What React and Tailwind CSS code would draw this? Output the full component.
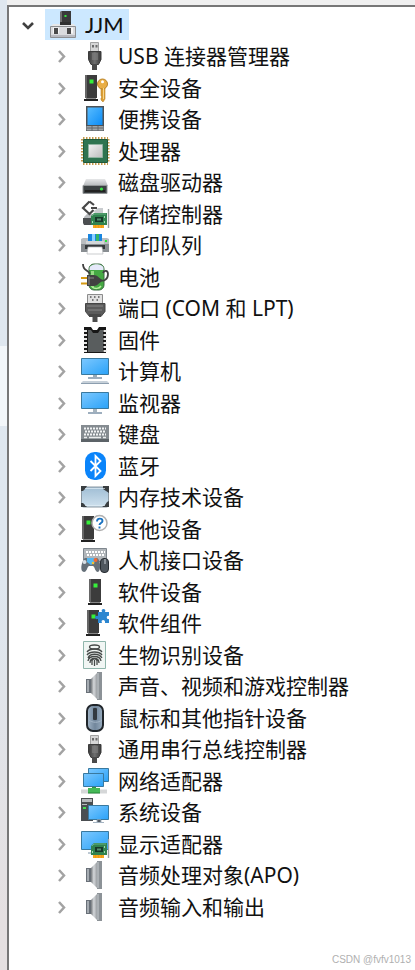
import React from "react";

const Svg = ({ children }) => (
  <svg viewBox="0 0 30 30" className="h-[30px] w-[30px] shrink-0" aria-hidden="true">
    {children}
  </svg>
);

const Defs = () => (
  <svg className="absolute h-0 w-0" aria-hidden="true">
    <defs>
      <linearGradient id="screen" x1="0" y1="0" x2="1" y2="1">
        <stop offset="0" stopColor="#7cc8ff" />
        <stop offset="1" stopColor="#2aa2f8" />
      </linearGradient>
      <linearGradient id="tablet" x1="0" y1="0" x2="1" y2="1">
        <stop offset="0" stopColor="#58bcff" />
        <stop offset="1" stopColor="#0c8cf6" />
      </linearGradient>
      <linearGradient id="steel" x1="0" y1="0" x2="1" y2="0">
        <stop offset="0" stopColor="#75797d" />
        <stop offset="0.4" stopColor="#d4d7da" />
        <stop offset="1" stopColor="#8a8e92" />
      </linearGradient>
      <linearGradient id="silver" x1="0" y1="0" x2="0" y2="1">
        <stop offset="0" stopColor="#e6e7e8" />
        <stop offset="1" stopColor="#b4b7ba" />
      </linearGradient>
      <linearGradient id="chip" x1="0" y1="0" x2="1" y2="1">
        <stop offset="0" stopColor="#f2f2f2" />
        <stop offset="1" stopColor="#bdbdbd" />
      </linearGradient>
      <linearGradient id="memory" x1="0" y1="0" x2="0" y2="1">
        <stop offset="0" stopColor="#9fbdd4" />
        <stop offset="1" stopColor="#cfe1ee" />
      </linearGradient>
      <linearGradient id="plug" x1="0" y1="0" x2="1" y2="0">
        <stop offset="0" stopColor="#3b3b3b" />
        <stop offset="0.5" stopColor="#6f6f6f" />
        <stop offset="1" stopColor="#383838" />
      </linearGradient>
      <linearGradient id="mouse" x1="0" y1="0" x2="1" y2="0">
        <stop offset="0" stopColor="#a3b6c8" />
        <stop offset="0.5" stopColor="#71869b" />
        <stop offset="1" stopColor="#9aaec1" />
      </linearGradient>
    </defs>
  </svg>
);

const Tower = ({ x = 0 }) => (
  <g transform={`translate(${x} 0)`}>
    <path d="M1 2h12v23H1z" fill="#3c3c3c" />
    <path d="M1 2h2v23H1z" fill="#666" />
    <path d="M0 26h14v2H0z" fill="#222" />
    <path d="M2 25h10v1H2z" fill="#888" />
    <path d="M5.500 6.500h4v4h-4z" fill="#36f03a" />
  </g>
);

const Card = () => (
  <g>
    <path d="M13 25h11v4H13z" fill="#f6a51c" />
    <path d="M15.500 25v4M18.500 25v4M21.500 25v4" stroke="#e08f10" strokeWidth="0.500" />
    <path d="M11 17l3-3h13v12H11z" fill="#31824f" />
    <path d="M12 17l2-2h12" fill="none" stroke="#69b083" />
    <path d="M15 18h8v5h-8z" fill="#17382a" />
    <path d="M17 19.500h4v2h-4z" fill="#568f70" />
    <path d="M12.500 22v2M24.500 17v2M24.500 22v2" stroke="#9fd8b0" />
    <path d="M28.500 10v19" stroke="#9a9fa2" strokeWidth="1.400" />
  </g>
);

const Usb = () => (
  <Svg>
    <path d="M10.500 1.500h8v9h-8z" fill="#d6d6d6" stroke="#a2a2a2" />
    <path d="M12 4h2v2.500h-2zM15.500 4h2v2.500h-2z" fill="#6b6b6b" />
    <path d="M8.500 10.500h12.500v8l-2.500 5h-7.500l-2.500-5z" fill="url(#plug)" stroke="#3c3c3c" />
    <path d="M12 12h6v7h-6z" fill="#808080" opacity="0.600" />
    <path d="M12 23h5v6h-5z" fill="#4a4a4a" />
  </Svg>
);

const Computer = () => (
  <Svg>
    <path d="M11 2l2-1h9v15H11z" fill="#3a3a3a" />
    <path d="M11 2l2-1v15h-2z" fill="#707070" />
    <path d="M15.500 5h2v2h-2z" fill="#36e63c" />
    <path d="M4 14h21l2 3H1z" fill="#e6e7e8" />
    <path d="M11 12h11v3H11z" fill="#303030" />
    <path d="M1.500 16.500h25v11h-25z" fill="#dadbde" stroke="#8d8f92" />
    <path d="M2 25h24v2H2z" fill="#b9bac0" />
    <path d="M4 17.500h6v6H4zM18 17.500h6v6h-6z" fill="#f7f7f7" />
    <path d="M5 18h4v6H5zM18 18h4v6h-4z" fill="#4a4a4a" />
  </Svg>
);

const Security = () => (
  <Svg>
    <Tower x={4} />
    <path d="M21 13h4v13l-2 3-2-2v-2l1-1-1-1z" fill="#dc9e35" stroke="#b98328" strokeWidth="0.600" />
    <circle cx="22.500" cy="11" r="5" fill="#e9ae45" stroke="#b98328" />
    <circle cx="22.500" cy="8.800" r="1.500" fill="#fff" />
    <path d="M23.500 15v11" stroke="#f8d68b" />
  </Svg>
);

const Portable = () => (
  <Svg>
    <path d="M6 2h18v25H6z" fill="#4c5257" />
    <path d="M7.500 3.500h15v17.500h-15z" fill="url(#tablet)" />
    <path d="M6.500 22h17v4.500h-17z" fill="#a0a5a8" />
    <path d="M12 22v5M18 22v5M7 24h16" stroke="#64696d" />
  </Svg>
);

const Processor = () => (
  <Svg>
    <path d="M3 2h25M3 28h25M2 3v24M28.500 3v24" stroke="#c59a4d" strokeWidth="2" strokeDasharray="1.500 1.500" />
    <path d="M3.500 3.500h24v23h-24z" fill="#2f7450" stroke="#1f5a3b" />
    <path d="M8.500 8.500h14v13h-14z" fill="url(#chip)" stroke="#90b3a0" />
  </Svg>
);

const Disk = () => (
  <Svg>
    <path d="M6 12h19l3 7H3z" fill="url(#silver)" />
    <path d="M3 18.500h24v8H3z" fill="#3b4042" stroke="#939698" />
    <path d="M5 24h20" stroke="#222" strokeWidth="2" />
    <circle cx="21.500" cy="22" r="1.600" fill="#3de348" />
  </Svg>
);

const Storage = () => (
  <Svg>
    <path d="M3 19h12v7H4l-1-2z" fill="#4b4e50" />
    <path d="M4 18l3-3h8l-2 4H4z" fill="#b7babd" />
    <path d="M14 12l4-3h5v6h-8z" fill="#c9cccf" />
    <path d="M9.500 2.500L3 9l6.500 6 4-4M9.500 2.500L14 6M11 9h6" fill="none" stroke="#484848" strokeWidth="2.200" />
    <Card />
  </Svg>
);

const Printer = () => (
  <Svg>
    <path d="M1 9l2-1h24l2 1v13H1z" fill="#b9bdc0" />
    <path d="M1 14h28v8H1z" fill="#898e92" />
    <path d="M8 4h14v7H8z" fill="#1a86e0" />
    <path d="M12 4h3v7h-3z" fill="#8bd1ff" />
    <path d="M16 4h3v7h-3z" fill="#35b565" />
    <path d="M6 11h18v3H6z" fill="#d3d6d8" />
    <path d="M5 15h20v4H5z" fill="#34383b" />
    <path d="M8 17h14l1 7H7z" fill="#fff" stroke="#b5b8ba" strokeWidth="0.700" />
    <path d="M25 10h2v2h-2z" fill="#2be53a" />
  </Svg>
);

const Battery = () => (
  <Svg>
    <rect x="9" y="2" width="15" height="26" rx="5" fill="#45a943" stroke="#3b6841" />
    <path d="M9.500 8V6c1-5 13-5 14 0v2z" fill="#e6e9fa" />
    <path d="M11 9h3v16h-3z" fill="#96dc84" />
    <path d="M12 25c3 2 7 2 9-1" fill="none" stroke="#b8f09f" strokeWidth="1.500" />
    <path d="M3 2c0 7 4 5 7 10M20 18c4 2 8-1 8-6 0-4-4-4-5-1" fill="none" stroke="#414141" strokeWidth="1.800" />
    <path d="M1 16h7M1 21.500h7" stroke="#d69a14" strokeWidth="2" />
    <path d="M7 13h7c3 0 5 3 9 5.500-4 2.500-6 5.500-9 5.500H7z" fill="#414141" />
    <path d="M8 16h6M9 14v9" stroke="#888" />
  </Svg>
);

const Port = () => (
  <Svg>
    <path d="M7.500 1.500h15v9h-15z" fill="#e1e1e1" stroke="#8c8c8c" />
    <path d="M10 4h1.500M14 4h1.500M18 4h1.500M12 7h1.500M16.500 7H18" stroke="#555" strokeWidth="1.500" />
    <path d="M5.500 10.500h19.500v8l-4 5H9.500l-4-5z" fill="#5b5b5b" stroke="#454545" />
    <path d="M7 13h16M8 17h14" stroke="#898989" />
    <path d="M9 21h12v3H9z" fill="#484848" />
    <path d="M12.500 24h5v5h-5z" fill="#4b4b4b" />
  </Svg>
);

const Firmware = () => (
  <Svg>
    <path d="M4 2h7l2 3h4l2-3h7v26H4z" fill="#171717" />
    <path d="M8 5h3l2 3h5l2-3h3v22H8z" fill="#595d5e" />
    <path d="M5.500 5v22M25 5v22" stroke="#e7e7e7" strokeWidth="3" strokeDasharray="2 2" />
  </Svg>
);

const Monitor = ({ desk = false }) => (
  <Svg>
    {desk ? (
      <g>
        <path d="M1.500 2.500h27v16h-27z" fill="url(#screen)" stroke="#39799f" />
        <path d="M13 19h4v2h-4z" fill="#9cacb8" />
        <path d="M8 22h14" stroke="#7c93a8" strokeWidth="1.500" />
        <path d="M3 25h24l2 2H1z" fill="#c6d0d9" />
        <path d="M1 27.500h28" stroke="#8c9eaf" />
      </g>
    ) : (
      <g>
        <path d="M1.500 4.500h27v16h-27z" fill="url(#screen)" stroke="#39799f" />
        <path d="M13 21h4v3h-4z" fill="#a6b4bf" />
        <path d="M8 25h14" stroke="#7c93a8" strokeWidth="1.500" />
      </g>
    )}
  </Svg>
);

const Keyboard = () => (
  <Svg>
    <path d="M1 6h28v17H1z" fill="#858c91" />
    <path d="M1 20h28v3H1z" fill="#5c6368" />
    <path d="M4 9.500h22M5 12.500h21M4 15.500h22" stroke="#f2f4f5" strokeWidth="2" strokeDasharray="2 1" />
    <path d="M4 18.500h3M9 18.500h12M23 18.500h3" stroke="#eceeef" strokeWidth="1.500" />
  </Svg>
);

const Bluetooth = () => (
  <Svg>
    <rect x="5" y="1" width="21" height="28" rx="9.500" fill="#0a84fa" />
    <path d="M10.500 10l10 10-5 5V5l5 5-10 10" fill="none" stroke="#fff" strokeWidth="1.800" />
  </Svg>
);

const Memory = () => (
  <Svg>
    <rect x="1.500" y="5" width="27" height="20" rx="2" fill="url(#memory)" stroke="#8b98a2" />
    <path d="M1 9V4h6l-2 3-2 2zM23 4h6v7l-3-2-3-2zM1 21v4h6l-2-2-2-2zM29 19v6h-7l3-2 2-3z" fill="#3a3e41" />
    <path d="M5 6.500h20M5 23.500h20" stroke="#e1eef7" strokeWidth="0.700" />
  </Svg>
);

const Other = () => (
  <Svg>
    <Tower x={1} />
    <circle cx="19.500" cy="9" r="7.500" fill="#fff" stroke="#b0b0b0" strokeWidth="1.500" />
    <path d="M17 7.500c0-4 5.500-3.500 5.500-.500 0 2-3 2-3 4M19.500 12.500v2" fill="none" stroke="#1972c0" strokeWidth="1.900" />
  </Svg>
);

const Hid = () => (
  <Svg>
    <path d="M3.500 3.500h23v13h-23z" fill="#b1b6ba" stroke="#7f878e" />
    <path d="M6 7h19M7 10h18" stroke="#fff" strokeWidth="2" strokeDasharray="2 1" />
    <path d="M5 13h12c4 2 4 13 1 14-3 0-3-5-5-6H9c-2 1-2 6-5 6-5 0-2-12 1-14z" fill="#667079" />
    <path d="M7 13h8v4l-4 3-4-3z" fill="#55b7ef" />
    <circle cx="4.500" cy="17" r="2" fill="#d8dfe5" />
    <circle cx="15.500" cy="15" r="2" fill="#f26933" />
    <circle cx="13" cy="18" r="1.300" fill="#f3c535" />
    <rect x="20.500" y="13.500" width="8" height="14" rx="3.500" fill="#4f575e" stroke="#282d32" />
    <path d="M25 14v5" stroke="#c9d0d6" />
  </Svg>
);

const Software = () => (
  <Svg>
    <Tower x={8} />
  </Svg>
);

const Component = () => (
  <Svg>
    <Tower x={6} />
    <path d="M18 4h4c-2-4 5-4 3 0h4v4c-3-1-3 4 0 3v4h-4c1-4-5-4-3 0h-4v-4c-4 1-4-4 0-3z" fill="#2b86d0" />
  </Svg>
);

const Fingerprint = () => (
  <Svg>
    <path d="M3.500 1.500h22v27h-22z" fill="#f1f6f4" stroke="#90b6ac" />
    <g fill="none" stroke="#464a49" strokeWidth="1.300">
      <ellipse cx="14.500" cy="7" rx="5" ry="2" />
      <path d="M7 12c3-4 12-4 15 0M7 15c3-4 12-4 15 0M8 18c2-5 11-5 14 0M8 21c1-6 12-6 13 0M10 23c0-6 9-6 9 0M12 25v-4c0-3 5-3 5 0v4M14.500 20v6" />
    </g>
  </Svg>
);

const Speaker = () => (
  <Svg>
    <path d="M6 8h6v14H6z" fill="#697078" />
    <path d="M7 9h2v12H7z" fill="#a5abb1" />
    <path d="M11 8l7-7v28l-7-7z" fill="url(#steel)" />
    <path d="M17 1h5v28h-5z" fill="#8c9297" />
    <path d="M18 2v26" stroke="#c9ced2" />
  </Svg>
);

const Mouse = () => (
  <Svg>
    <rect x="7" y="2" width="16" height="26" rx="6" fill="url(#mouse)" stroke="#20252a" strokeWidth="2" />
    <path d="M9 17c3 3 10 3 13 0" fill="none" stroke="#a3b5c6" />
    <rect x="13" y="5" width="4" height="12" rx="1" fill="#33393f" />
  </Svg>
);

const Network = () => (
  <Svg>
    <path d="M8.500 2.500h20v13h-20z" fill="url(#screen)" stroke="#39799f" />
    <path d="M3.500 7.500h20v13h-20z" fill="url(#screen)" stroke="#39799f" />
    <path d="M12 21h4v3h-4z" fill="#2e9a40" />
    <path d="M1 23.500h26v4H1z" fill="#d5d7d8" />
    <path d="M8 22h12v5H8z" fill="#45b957" />
    <path d="M8 27h12" stroke="#268638" />
  </Svg>
);

const System = () => (
  <Svg>
    <path d="M1 1h12v23H1z" fill="#4a4e51" />
    <path d="M2 2h10v3H2zM2 7h5v1H2z" fill="#b7babd" />
    <path d="M3 10h3v2H3z" fill="#44de50" />
    <path d="M8.500 8.500h20v14h-20z" fill="url(#screen)" stroke="#39799f" />
    <path d="M17 23h4v2h-4zM13 25.500h11" stroke="#a5b4c2" />
  </Svg>
);

const Display = () => (
  <Svg>
    <path d="M1.500 2.500h27v18h-27z" fill="url(#screen)" stroke="#39799f" />
    <path d="M8 24h6" stroke="#7c93a8" />
    <Card />
  </Svg>
);

const DEVICES = [
  ["USB 连接器管理器", <Usb />],
  ["安全设备", <Security />],
  ["便携设备", <Portable />],
  ["处理器", <Processor />],
  ["磁盘驱动器", <Disk />],
  ["存储控制器", <Storage />],
  ["打印队列", <Printer />],
  ["电池", <Battery />],
  ["端口 (COM 和 LPT)", <Port />],
  ["固件", <Firmware />],
  ["计算机", <Monitor desk />],
  ["监视器", <Monitor />],
  ["键盘", <Keyboard />],
  ["蓝牙", <Bluetooth />],
  ["内存技术设备", <Memory />],
  ["其他设备", <Other />],
  ["人机接口设备", <Hid />],
  ["软件设备", <Software />],
  ["软件组件", <Component />],
  ["生物识别设备", <Fingerprint />],
  ["声音、视频和游戏控制器", <Speaker />],
  ["鼠标和其他指针设备", <Mouse />],
  ["通用串行总线控制器", <Usb />],
  ["网络适配器", <Network />],
  ["系统设备", <System />],
  ["显示适配器", <Display />],
  ["音频处理对象(APO)", <Speaker />],
  ["音频输入和输出", <Speaker />],
];

const Chevron = ({ open = false }) => (
  <svg viewBox="0 0 14 14" className="h-[14px] w-[14px] shrink-0" fill="none" aria-hidden="true">
    {open ? (
      <path d="M2 5l5 5 5-5" stroke="#404040" strokeWidth="2.600" />
    ) : (
      <path d="M4 2l5 5.500L4 13" stroke="#a3a3a3" strokeWidth="2.500" />
    )}
  </svg>
);

export default function App() {
  return (
    <div className="flex min-h-screen bg-white font-['Noto_Sans','Noto_Sans_CJK_SC',sans-serif] text-[21px] leading-[30px] text-[#111]">
      <Defs />
      <div className="flex w-[7px] shrink-0 flex-col bg-linear-to-b from-[#dfe7ef] from-60% to-[#e5e0e1] to-95%">
        <div className="h-[346px]" />
        <div className="h-20 bg-[#f2f6f9]" />
      </div>
      <div className="flex min-w-0 flex-1 flex-col">
        <div className="h-[5px] bg-[#f0f0f0]" />
        <main className="flex flex-1 flex-col border-l-2 border-t-2 border-[#777] pt-[2px]">
          <button type="button" className="flex h-[31px] items-center self-start pl-3 text-left">
            <Chevron open />
            <span className="ml-[10px] flex h-full items-center gap-[6px] bg-[#cce8ff] pl-1 pr-[5px] font-[Lato,sans-serif] text-[22px]">
              <Computer />
              JJM
            </span>
          </button>
          <ul>
            {DEVICES.map(([label, icon]) => (
              <li key={label} className="odd:h-8 even:h-[31px]">
                <button type="button" className="flex h-full items-center whitespace-nowrap pl-[46px] text-left">
                  <Chevron />
                  <span className="ml-[11px] mr-2">{icon}</span>
                  {label}
                </button>
              </li>
            ))}
          </ul>
          <p className="mt-auto pb-1 pr-1 text-right font-['Liberation_Sans',sans-serif] text-[10px] leading-3 text-[#b0b0b0]">
            CSDN @fvfv1013
          </p>
        </main>
      </div>
    </div>
  );
}
